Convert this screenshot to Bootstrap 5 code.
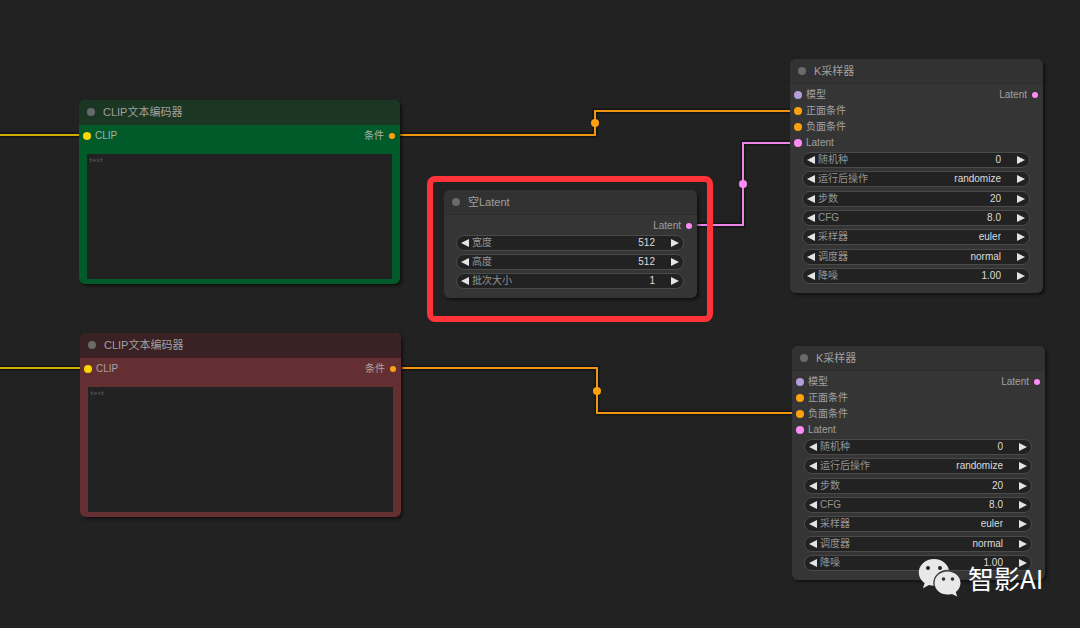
<!DOCTYPE html>
<html lang="zh-CN">
<head>
<meta charset="utf-8">
<meta name="viewport" content="width=device-width, initial-scale=1">
<title>节点工作流</title>
<link href="https://cdn.jsdelivr.net/npm/bootstrap@5.3.0/dist/css/bootstrap.min.css" rel="stylesheet">
<style>
  body { background: #222; font-family: "Liberation Sans", "Noto Sans CJK SC", sans-serif; }
  .board {
    min-height: 100vh;
    background-image:
      linear-gradient(#202020 1px, transparent 1px),
      linear-gradient(90deg, #202020 1px, transparent 1px);
    background-size: 8px 8px;
  }
  .wires { inset: 0; pointer-events: none; }
  .wires path { fill: none; stroke-width: 2; }
  .wires .halo { stroke: #151515; stroke-width: 5; }

  /* nodes on the free canvas */
  .node {
    --node-head: #323232;
    --node-body: #353535;
    position: absolute; width: 253px; border-radius: 6px;
    background: var(--node-body); color: #a0a0a0;
    font-size: 10px; line-height: 16px;
    box-shadow: 2px 2px 3px rgba(0, 0, 0, .5);
  }
  .node-head {
    height: 25px; padding-left: 8px; gap: 8px;
    background: var(--node-head); border-bottom: 1px solid #2d2d2d;
    border-radius: 6px 6px 0 0;
  }
  .node-title { font-size: 11px; line-height: 16px; font-weight: 400; color: #a0a0a0; }
  .node-dot { width: 8px; height: 8px; border-radius: 50%; background: #6a6a6a; }
  .node-slots { padding: 3px 5px 0 4px; }
  .slot { height: 16px; gap: 4px; }
  .port { width: 8px; height: 8px; border-radius: 50%; background: var(--port); }
  .port-out { width: 6px; height: 6px; margin-left: 1px; }
  .p-clip { --port: #ffd500; } .p-cond { --port: #ffa010; }
  .p-latent { --port: #ff8cf5; } .p-model { --port: #b39ddb; }

  .node-text { width: 321px; }
  .node-text .node-head { border-bottom-color: var(--node-head); }
  .node-text .slot { color: #a8b0a8; }
  .node-green { --node-head: #1b3622; --node-body: #005a2a; }
  .node-red { --node-head: #3a2123; --node-body: #632f33; }
  .node-red .slot { color: #b0a0a0; }
  .prompt {
    width: calc(100% - 16px); height: 125px; margin: 10px 8px 5px; padding: 2px;
    border: 0; border-radius: 0; resize: none; background: #222; color: #666;
    font: 6px/10px "Liberation Mono", monospace;
  }

  .fields { padding: 1px 13px 9px 12px; gap: 3px; }
  .fields-tall { min-height: 142px; padding-bottom: 9px; }
  .pill { height: 16px; padding: 0 4px; border: 1px solid #4a4a4a; border-radius: 8px; background: #222; }
  .pill label { color: #949494; padding-left: 3px; white-space: nowrap; }
  .pill input {
    flex: 1 1 0; min-width: 0; padding: 0 16px 0 0; border: 0; background: none;
    color: #dcdcdc; text-align: right; font-size: 10px; line-height: 14px; height: 14px;
  }
  .step { width: 8px; height: 14px; padding: 0; border: 0; background: none; line-height: 0; }
  .step svg { width: 8px; height: 8px; fill: #e4e4e4; }

  #encode-a { left: 79px; top: 100px; }
  #encode-b { left: 80px; top: 333px; }
  #latent { left: 444px; top: 190px; }
  #sampler-a { left: 790px; top: 59px; }
  #sampler-b { left: 792px; top: 346px; }
  .marker { left: 427px; top: 176px; width: 286px; height: 146px; border: 6px solid #ff3338; border-radius: 8px; pointer-events: none; }
  .watermark { left: 918px; top: 558px; gap: 6px; color: #fff; }
  .watermark svg { width: 44px; height: 40px; }
  .watermark span { font: 26px/36px "Noto Sans CJK SC", sans-serif; white-space: nowrap; }
</style>
</head>
<body>
<svg class="d-none" aria-hidden="true">
  <symbol id="i-prev" viewBox="0 0 8 8"><path d="M8 0v8L0 4z"/></symbol>
  <symbol id="i-next" viewBox="0 0 8 8"><path d="M0 0v8l8-4z"/></symbol>
</svg>

<main class="board position-relative overflow-hidden">
  <svg class="wires position-absolute w-100 h-100" aria-hidden="true">
    <path class="halo" d="M0 135H79M0 368H80M400 135H595V111H790M402 368H597V413H792M697 225H743V143H790"/>
    <path stroke="#d0ae00" d="M0 135H79M0 368H80"/>
    <path stroke="#ef9510" d="M400 135H595V111H790M402 368H597V413H792"/>
    <path stroke="#ee84e5" d="M697 225H743V143H790"/>
    <g fill="#ffa010"><circle cx="595" cy="123" r="4"/><circle cx="597" cy="391" r="4"/></g>
    <circle cx="743" cy="184" r="4" fill="#ff8cf5"/>
  </svg>

  <section class="node node-text node-green" id="encode-a">
    <header class="node-head d-flex align-items-center"><span class="node-dot"></span><h2 class="node-title m-0">CLIP文本编码器</h2></header>
    <div class="node-slots d-flex justify-content-between">
      <div class="slot d-flex align-items-center"><span class="port p-clip"></span>CLIP</div>
      <div class="slot d-flex align-items-center">条件<span class="port port-out p-cond"></span></div>
    </div>
    <textarea class="prompt d-block" aria-label="文本">text</textarea>
  </section>

  <section class="node node-text node-red" id="encode-b">
    <header class="node-head d-flex align-items-center"><span class="node-dot"></span><h2 class="node-title m-0">CLIP文本编码器</h2></header>
    <div class="node-slots d-flex justify-content-between">
      <div class="slot d-flex align-items-center"><span class="port p-clip"></span>CLIP</div>
      <div class="slot d-flex align-items-center">条件<span class="port port-out p-cond"></span></div>
    </div>
    <textarea class="prompt d-block" aria-label="文本">text</textarea>
  </section>

  <section class="node" id="latent">
    <header class="node-head d-flex align-items-center"><span class="node-dot"></span><h2 class="node-title m-0">空Latent</h2></header>
    <div class="node-slots d-flex justify-content-end">
      <div class="slot d-flex align-items-center">Latent<span class="port port-out p-latent"></span></div>
    </div>
    <div class="fields d-flex flex-column">
      <div class="pill d-flex align-items-center"><button class="step" type="button" aria-label="减小"><svg><use href="#i-prev"/></svg></button><label for="l-w">宽度</label><input id="l-w" value="512"><button class="step" type="button" aria-label="增大"><svg><use href="#i-next"/></svg></button></div>
      <div class="pill d-flex align-items-center"><button class="step" type="button" aria-label="减小"><svg><use href="#i-prev"/></svg></button><label for="l-h">高度</label><input id="l-h" value="512"><button class="step" type="button" aria-label="增大"><svg><use href="#i-next"/></svg></button></div>
      <div class="pill d-flex align-items-center"><button class="step" type="button" aria-label="减小"><svg><use href="#i-prev"/></svg></button><label for="l-b">批次大小</label><input id="l-b" value="1"><button class="step" type="button" aria-label="增大"><svg><use href="#i-next"/></svg></button></div>
    </div>
  </section>

  <section class="node" id="sampler-a">
    <header class="node-head d-flex align-items-center"><span class="node-dot"></span><h2 class="node-title m-0">K采样器</h2></header>
    <div class="node-slots d-flex justify-content-between">
      <div>
        <div class="slot d-flex align-items-center"><span class="port p-model"></span>模型</div>
        <div class="slot d-flex align-items-center"><span class="port p-cond"></span>正面条件</div>
        <div class="slot d-flex align-items-center"><span class="port p-cond"></span>负面条件</div>
        <div class="slot d-flex align-items-center"><span class="port p-latent"></span>Latent</div>
      </div>
      <div class="slot d-flex align-items-center">Latent<span class="port port-out p-latent"></span></div>
    </div>
    <div class="fields fields-tall d-flex flex-column justify-content-between">
      <div class="pill d-flex align-items-center"><button class="step" type="button" aria-label="上一个"><svg><use href="#i-prev"/></svg></button><label for="a-seed">随机种</label><input id="a-seed" value="0"><button class="step" type="button" aria-label="下一个"><svg><use href="#i-next"/></svg></button></div>
      <div class="pill d-flex align-items-center"><button class="step" type="button" aria-label="上一个"><svg><use href="#i-prev"/></svg></button><label for="a-after">运行后操作</label><input id="a-after" value="randomize"><button class="step" type="button" aria-label="下一个"><svg><use href="#i-next"/></svg></button></div>
      <div class="pill d-flex align-items-center"><button class="step" type="button" aria-label="上一个"><svg><use href="#i-prev"/></svg></button><label for="a-steps">步数</label><input id="a-steps" value="20"><button class="step" type="button" aria-label="下一个"><svg><use href="#i-next"/></svg></button></div>
      <div class="pill d-flex align-items-center"><button class="step" type="button" aria-label="上一个"><svg><use href="#i-prev"/></svg></button><label for="a-cfg">CFG</label><input id="a-cfg" value="8.0"><button class="step" type="button" aria-label="下一个"><svg><use href="#i-next"/></svg></button></div>
      <div class="pill d-flex align-items-center"><button class="step" type="button" aria-label="上一个"><svg><use href="#i-prev"/></svg></button><label for="a-sampler">采样器</label><input id="a-sampler" value="euler"><button class="step" type="button" aria-label="下一个"><svg><use href="#i-next"/></svg></button></div>
      <div class="pill d-flex align-items-center"><button class="step" type="button" aria-label="上一个"><svg><use href="#i-prev"/></svg></button><label for="a-sched">调度器</label><input id="a-sched" value="normal"><button class="step" type="button" aria-label="下一个"><svg><use href="#i-next"/></svg></button></div>
      <div class="pill d-flex align-items-center"><button class="step" type="button" aria-label="上一个"><svg><use href="#i-prev"/></svg></button><label for="a-denoise">降噪</label><input id="a-denoise" value="1.00"><button class="step" type="button" aria-label="下一个"><svg><use href="#i-next"/></svg></button></div>
    </div>
  </section>

  <section class="node" id="sampler-b">
    <header class="node-head d-flex align-items-center"><span class="node-dot"></span><h2 class="node-title m-0">K采样器</h2></header>
    <div class="node-slots d-flex justify-content-between">
      <div>
        <div class="slot d-flex align-items-center"><span class="port p-model"></span>模型</div>
        <div class="slot d-flex align-items-center"><span class="port p-cond"></span>正面条件</div>
        <div class="slot d-flex align-items-center"><span class="port p-cond"></span>负面条件</div>
        <div class="slot d-flex align-items-center"><span class="port p-latent"></span>Latent</div>
      </div>
      <div class="slot d-flex align-items-center">Latent<span class="port port-out p-latent"></span></div>
    </div>
    <div class="fields fields-tall d-flex flex-column justify-content-between">
      <div class="pill d-flex align-items-center"><button class="step" type="button" aria-label="上一个"><svg><use href="#i-prev"/></svg></button><label for="b-seed">随机种</label><input id="b-seed" value="0"><button class="step" type="button" aria-label="下一个"><svg><use href="#i-next"/></svg></button></div>
      <div class="pill d-flex align-items-center"><button class="step" type="button" aria-label="上一个"><svg><use href="#i-prev"/></svg></button><label for="b-after">运行后操作</label><input id="b-after" value="randomize"><button class="step" type="button" aria-label="下一个"><svg><use href="#i-next"/></svg></button></div>
      <div class="pill d-flex align-items-center"><button class="step" type="button" aria-label="上一个"><svg><use href="#i-prev"/></svg></button><label for="b-steps">步数</label><input id="b-steps" value="20"><button class="step" type="button" aria-label="下一个"><svg><use href="#i-next"/></svg></button></div>
      <div class="pill d-flex align-items-center"><button class="step" type="button" aria-label="上一个"><svg><use href="#i-prev"/></svg></button><label for="b-cfg">CFG</label><input id="b-cfg" value="8.0"><button class="step" type="button" aria-label="下一个"><svg><use href="#i-next"/></svg></button></div>
      <div class="pill d-flex align-items-center"><button class="step" type="button" aria-label="上一个"><svg><use href="#i-prev"/></svg></button><label for="b-sampler">采样器</label><input id="b-sampler" value="euler"><button class="step" type="button" aria-label="下一个"><svg><use href="#i-next"/></svg></button></div>
      <div class="pill d-flex align-items-center"><button class="step" type="button" aria-label="上一个"><svg><use href="#i-prev"/></svg></button><label for="b-sched">调度器</label><input id="b-sched" value="normal"><button class="step" type="button" aria-label="下一个"><svg><use href="#i-next"/></svg></button></div>
      <div class="pill d-flex align-items-center"><button class="step" type="button" aria-label="上一个"><svg><use href="#i-prev"/></svg></button><label for="b-denoise">降噪</label><input id="b-denoise" value="1.00"><button class="step" type="button" aria-label="下一个"><svg><use href="#i-next"/></svg></button></div>
    </div>
  </section>

  <div class="marker position-absolute"></div>

  <div class="watermark position-absolute d-flex align-items-center">
    <svg viewBox="0 0 44 40" fill="#e8e8e8" aria-hidden="true">
      <mask id="bubble-back"><rect width="44" height="40" fill="#fff"/><ellipse cx="29.500" cy="25" rx="14.200" ry="13.200" fill="#000"/><circle cx="10" cy="10" r="2" fill="#000"/><circle cx="22" cy="10" r="2" fill="#000"/></mask>
      <mask id="bubble-front"><rect width="44" height="40" fill="#fff"/><circle cx="25.500" cy="21" r="1.800" fill="#000"/><circle cx="34.500" cy="21" r="1.800" fill="#000"/></mask>
      <path mask="url(#bubble-back)" d="M16 1C7.500 1 .8 7 .8 14.500c0 4.400 2.200 8 5.800 10.500L5 30.200l6-3.200c1.600.5 3.200.8 5 .8 8.500 0 15.300-6 15.300-13.300C31.300 7 24.500 1 16 1z"/>
      <path mask="url(#bubble-front)" d="M29.500 13.500c-7.200 0-13 5-13 11.500s5.800 11.600 13 11.600c1.600 0 3-.2 4.400-.7l5.300 2.600-1.400-4.600c2.900-2.100 4.700-5.300 4.700-8.900 0-6.500-5.800-11.500-13-11.500z"/>
    </svg>
    <span>智影AI</span>
  </div>
</main>
<script src="https://cdn.jsdelivr.net/npm/bootstrap@5.3.0/dist/js/bootstrap.bundle.min.js"></script>
</body>
</html>
